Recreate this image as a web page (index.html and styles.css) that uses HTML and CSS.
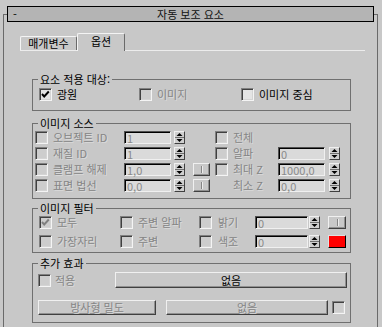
FILE: index.html
```html
<!DOCTYPE html>
<html lang="ko">
<head>
<meta charset="utf-8">
<link rel="stylesheet" href="styles.css">
</head>
<body>
<div class="rollout">
  <div class="titlebar"><span class="minus">-</span><span class="title">자동 보조 요소</span><span></span></div>
  <div class="tabs">
    <div class="tab">매개변수</div>
    <div class="tab active">옵션</div>
  </div>
  <div class="panel">
    <div class="group g1">
      <div class="legend">요소 적용 대상:</div>
      <div class="row1">
        <div class="opt w100"><span class="cb on"><svg width="11" height="11" viewBox="0 0 11 11"><polyline points="2,5 4.2,7.5 8.8,2.5" fill="none" stroke="#000" stroke-width="1.9"/></svg></span><span>광원</span></div>
        <div class="opt w102"><span class="cb"></span><span class="dis">이미지</span></div>
        <div class="opt"><span class="cb on"></span><span>이미지 중심</span></div>
      </div>
    </div>

    <div class="group g2">
      <div class="legend">이미지 소스</div>
      <div class="r2 first">
        <span class="cb k1"></span><span class="dis k3">오브젝트 ID</span>
        <span class="inp k4">1</span><span class="spn k6"><svg width="9" height="11" viewBox="0 0 9 11"><polygon points="1.5,4 4.5,1 7.5,4"/><line x1="0" y1="5.5" x2="9" y2="5.5" stroke="#707070"/><polygon points="1.5,7 7.5,7 4.5,10"/></svg></span>
        <span class="cb k10"></span><span class="dis k12">전체</span>
      </div>
      <div class="r2">
        <span class="cb k1"></span><span class="dis k3">재질 ID</span>
        <span class="inp k4">1</span><span class="spn k6"><svg width="9" height="11" viewBox="0 0 9 11"><polygon points="1.5,4 4.5,1 7.5,4"/><line x1="0" y1="5.5" x2="9" y2="5.5" stroke="#707070"/><polygon points="1.5,7 7.5,7 4.5,10"/></svg></span>
        <span class="cb k10"></span><span class="dis k12">알파</span>
        <span class="inp k13">0</span><span class="spn k15"><svg width="9" height="11" viewBox="0 0 9 11"><polygon points="1.5,4 4.5,1 7.5,4"/><line x1="0" y1="5.5" x2="9" y2="5.5" stroke="#707070"/><polygon points="1.5,7 7.5,7 4.5,10"/></svg></span>
      </div>
      <div class="r2">
        <span class="cb k1"></span><span class="dis k3">클램프 해제</span>
        <span class="inp k4">1,0</span><span class="spn k6"><svg width="9" height="11" viewBox="0 0 9 11"><polygon points="1.5,4 4.5,1 7.5,4"/><line x1="0" y1="5.5" x2="9" y2="5.5" stroke="#707070"/><polygon points="1.5,7 7.5,7 4.5,10"/></svg></span>
        <span class="sbtn k8"><i class="bar"></i></span>
        <span class="cb k10"></span><span class="dis k12">최대 Z</span>
        <span class="inp k13">1000,0</span><span class="spn k15"><svg width="9" height="11" viewBox="0 0 9 11"><polygon points="1.5,4 4.5,1 7.5,4"/><line x1="0" y1="5.5" x2="9" y2="5.5" stroke="#707070"/><polygon points="1.5,7 7.5,7 4.5,10"/></svg></span>
      </div>
      <div class="r2">
        <span class="cb k1"></span><span class="dis k3">표면 법선</span>
        <span class="inp k4">0,0</span><span class="spn k6"><svg width="9" height="11" viewBox="0 0 9 11"><polygon points="1.5,4 4.5,1 7.5,4"/><line x1="0" y1="5.5" x2="9" y2="5.5" stroke="#707070"/><polygon points="1.5,7 7.5,7 4.5,10"/></svg></span>
        <span class="sbtn k8"><i class="bar"></i></span>
        <span class="dis k12">최소 Z</span>
        <span class="inp k13">0,0</span><span class="spn k15"><svg width="9" height="11" viewBox="0 0 9 11"><polygon points="1.5,4 4.5,1 7.5,4"/><line x1="0" y1="5.5" x2="9" y2="5.5" stroke="#707070"/><polygon points="1.5,7 7.5,7 4.5,10"/></svg></span>
      </div>
    </div>

    <div class="group g3">
      <div class="legend">이미지 필터</div>
      <div class="r3 first">
        <span class="cb m1"><svg width="11" height="11" viewBox="0 0 11 11"><polyline points="2,5 4.2,7.5 8.8,2.5" fill="none" stroke="#808080" stroke-width="1.9"/></svg></span><span class="dis m3">모두</span>
        <span class="cb m4"></span><span class="dis m6">주변 알파</span>
        <span class="cb m7"></span><span class="dis m9">밝기</span>
        <span class="inp m10">0</span><span class="spn m12"><svg width="9" height="11" viewBox="0 0 9 11"><polygon points="1.5,4 4.5,1 7.5,4"/><line x1="0" y1="5.5" x2="9" y2="5.5" stroke="#707070"/><polygon points="1.5,7 7.5,7 4.5,10"/></svg></span>
        <span class="sbtn m14"><i class="bar"></i></span>
      </div>
      <div class="r3 second">
        <span class="cb m1"></span><span class="dis m3">가장자리</span>
        <span class="cb m4"></span><span class="dis m6">주변</span>
        <span class="cb m7"></span><span class="dis m9">색조</span>
        <span class="inp m10">0</span><span class="spn m12"><svg width="9" height="11" viewBox="0 0 9 11"><polygon points="1.5,4 4.5,1 7.5,4"/><line x1="0" y1="5.5" x2="9" y2="5.5" stroke="#707070"/><polygon points="1.5,7 7.5,7 4.5,10"/></svg></span>
        <span class="swatch m14"></span>
      </div>
    </div>

    <div class="group g4">
      <div class="legend">추가 효과</div>
      <div class="r4a">
        <span class="cb"></span><span></span><span class="dis">적용</span>
        <span class="btn">없음</span>
      </div>
      <div class="r4b">
        <span class="btn dis">방사형 밀도</span><span></span>
        <span class="btn dis">없음</span><span></span>
        <span class="cb"></span>
      </div>
    </div>
  </div>
</div>
</body>
</html>
```

FILE: styles.css
```css
* { box-sizing: border-box; }

body {
  margin: 0;
  width: 382px;
  height: 327px;
  overflow: hidden;
  background: #c8c8c8;
  color: #000;
  font-family: "Noto Sans CJK KR", "Noto Sans", sans-serif;
  font-size: 11px;
}

.rollout {
  margin: 14px 0 0 3px;
  width: 375px;
  height: 313px;
  border-top: 1px solid #6a6a6a;
  border-left: 1px solid #6a6a6a;
  border-right: 1px solid #6a6a6a;
}

.titlebar {
  margin: -9px 0 0 3px;
  width: 367px;
  height: 16px;
  background: #b4b4b4;
  border: 1px solid #000;
  display: grid;
  grid-template-columns: 20px 1fr 20px;
  align-items: center;
  line-height: 14px;
}

.minus { padding-left: 5px; }
.title { text-align: center; color: #111; }

.tabs {
  display: flex;
  align-items: flex-end;
  margin: 11px 0 0 16px;
  height: 17px;
}

.tab {
  width: 57px;
  height: 14px;
  border-top: 1px solid #f4f4f4;
  border-left: 1px solid #f4f4f4;
  border-right: 1px solid #6a6a6a;
  border-radius: 2px 2px 0 0;
  text-align: center;
  line-height: 13px;
}

.tab.active {
  width: 48px;
  height: 18px;
  margin-bottom: -1px;
  background: #c8c8c8;
  position: relative;
  z-index: 1;
  line-height: 15px;
}

.panel {
  margin-left: 16px;
  width: 345px;
  border-top: 1px solid #ececec;
}

.group {
  margin-left: 12px;
  width: 319px;
  border: 1px solid #707070;
}

.g1 { margin-top: 28px; padding-bottom: 9px; }
.g2 { margin-top: 12px; padding-bottom: 6px; }
.g3 { margin-top: 9px; padding-bottom: 4px; }
.g4 { margin-top: 10px; padding-bottom: 7px; }

.legend {
  width: fit-content;
  margin: -7px 0 0 5px;
  padding: 0 2px;
  height: 12px;
  line-height: 12px;
  background: #c8c8c8;
  white-space: nowrap;
}

.dis {
  color: #858585;
  text-shadow: 1px 1px 0 #dadada;
}

/* checkbox */
.cb {
  display: block;
  width: 13px;
  height: 13px;
  border: 1px solid;
  border-color: #808080 #f4f4f4 #f4f4f4 #808080;
  box-shadow: inset 1px 1px #404040, inset -1px -1px #d4d4d4;
  background: #cdcdcd;
}
.cb.on { background: #e4e4e4; }
.cb svg { display: block; }

/* group 1 */
.row1 {
  display: flex;
  margin-top: 3px;
  padding-left: 6px;
  height: 13px;
}
.opt {
  display: flex;
  align-items: center;
  gap: 5px;
  height: 13px;
  line-height: 13px;
  white-space: nowrap;
}
.w100 { width: 100px; }
.w102 { width: 102px; }

/* inputs */
.inp {
  display: block;
  height: 13px;
  border: 1px solid;
  border-color: #505050 #f0f0f0 #f0f0f0 #505050;
  box-shadow: inset 1px 1px #000;
  background: #dadada;
  color: #8a8a8a;
  padding-left: 2px;
  font-size: 11px;
  line-height: 12px;
  white-space: nowrap;
}

.spn {
  display: block;
  width: 11px;
  height: 13px;
  border: 1px solid;
  border-color: #f0f0f0 #404040 #404040 #f0f0f0;
  background: #cfcfcf;
}
.spn svg { display: block; }

.sbtn {
  display: flex;
  align-items: center;
  justify-content: center;
  height: 13px;
  border: 1px solid;
  border-color: #f0f0f0 #404040 #404040 #f0f0f0;
  box-shadow: inset -1px -1px #909090;
}
.bar {
  display: block;
  width: 1px;
  height: 7px;
  background: #858585;
  box-shadow: 1px 0 #ececec;
}

.swatch {
  display: block;
  height: 13px;
  background: #ff0000;
  border: 1px solid;
  border-color: #e0e0e0 #000 #000 #e0e0e0;
}

/* group 2 grid */
.r2 {
  display: grid;
  grid-template-columns: 13px 5px 71px 47px 3px 11px 8px 17px 5px 13px 5px 45px 47px 4px 11px;
  height: 13px;
  margin-top: 3px;
  padding-left: 2px;
  line-height: 13px;
  white-space: nowrap;
}
.r2.first { margin-top: 2px; }
.k1 { grid-column: 1; }
.k3 { grid-column: 3; }
.k4 { grid-column: 4; }
.k6 { grid-column: 6; }
.k8 { grid-column: 8; }
.k10 { grid-column: 10; }
.k12 { grid-column: 12; }
.k13 { grid-column: 13; }
.k15 { grid-column: 15; }

/* group 3 grid */
.r3 {
  display: grid;
  grid-template-columns: 13px 5px 63px 13px 5px 61px 13px 6px 37px 53px 1px 11px 8px 18px;
  height: 13px;
  padding-left: 6px;
  line-height: 13px;
  white-space: nowrap;
}
.r3.first { margin-top: 2px; }
.r3.second { margin-top: 6px; }
.m1 { grid-column: 1; }
.m3 { grid-column: 3; }
.m4 { grid-column: 4; }
.m6 { grid-column: 6; }
.m7 { grid-column: 7; }
.m9 { grid-column: 9; }
.m10 { grid-column: 10; }
.m12 { grid-column: 12; }
.m14 { grid-column: 14; }

/* group 4 */
.btn {
  display: block;
  border: 1px solid;
  border-color: #f0f0f0 #404040 #404040 #f0f0f0;
  box-shadow: inset -1px -1px #909090;
  text-align: center;
  white-space: nowrap;
}

.r4a {
  display: grid;
  grid-template-columns: 13px 4px 60px 232px;
  align-items: center;
  height: 16px;
  margin-top: 3px;
  padding-left: 5px;
}
.r4a .btn { height: 16px; line-height: 14px; }

.r4b {
  display: grid;
  grid-template-columns: 118px 10px 162px 4px 13px;
  align-items: center;
  height: 15px;
  margin-top: 12px;
  padding-left: 5px;
}
.r4b .btn { height: 15px; line-height: 13px; }
```
